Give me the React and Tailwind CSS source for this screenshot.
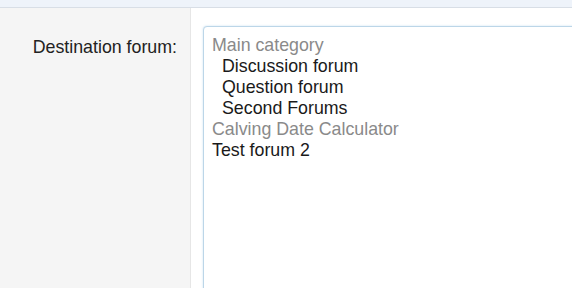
const options = [
  { label: 'Main category', muted: true, indent: false },
  { label: 'Discussion forum', muted: false, indent: true },
  { label: 'Question forum', muted: false, indent: true },
  { label: 'Second Forums', muted: false, indent: true },
  { label: 'Calving Date Calculator', muted: true, indent: false },
  { label: 'Test forum 2', muted: false, indent: false },
];

function App() {
  return (
    <div className="h-[288px] w-[572px] overflow-hidden bg-white font-['Liberation_Sans',Arial,sans-serif]">
      <div className="h-[8px] bg-[#eef3fa] border-b border-[#d8dee6]" />
      <div className="flex h-[280px]">
        <div className="w-[191px] shrink-0 bg-[#f5f5f5] border-r border-[#e6e6e6] pr-[13px] pt-[28px] text-right">
          <span className="text-[17.8px] leading-[21px] text-[#222]">Destination forum:</span>
        </div>
        <div className="flex-1 pl-[12px] pt-[18px]">
          <div className="h-[300px] w-[400px] rounded-[4px] border border-[#bcd6e8] bg-white pl-[8px] pt-[8px] shadow-[0_0_2px_rgba(140,190,225,0.5)]">
            {options.map((opt) => (
              <div
                key={opt.label}
                className={`text-[17.8px] leading-[21px] ${opt.muted ? 'text-[#8a8a8a]' : 'text-[#1a1a1a]'} ${opt.indent ? 'pl-[10px]' : ''}`}
              >
                {opt.label}
              </div>
            ))}
          </div>
        </div>
      </div>
    </div>
  );
}

export default App;
